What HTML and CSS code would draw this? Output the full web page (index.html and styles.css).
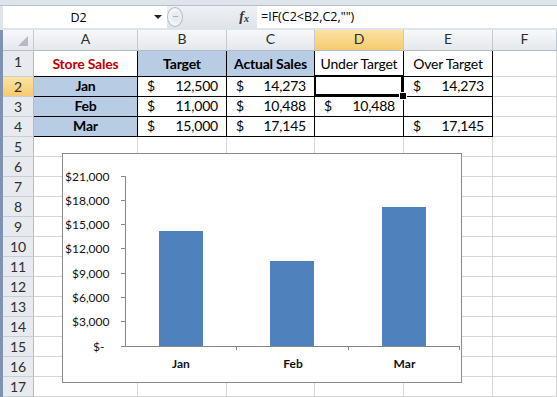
FILE: index.html
```html
<!DOCTYPE html>
<html lang="en">
<head>
    <meta charset="UTF-8">
    <title>Store Sales - Excel</title>
    <link rel="stylesheet" href="styles.css">
</head>
<body>
    <div class="app">
        <div class="ribbon-edge"></div>

        <div class="formula-bar">
            <div class="name-box">
                <span class="name">D2</span>
                <span class="caret"></span>
            </div>
            <div class="splitter">
                <span class="knob"></span>
                <span class="fx">f<sub>x</sub></span>
            </div>
            <div class="formula">=IF(C2&lt;B2,C2,"")</div>
        </div>

        <div class="sheet">
            <div class="grid">
                <!-- column headers -->
                <div class="c ch corner"></div>
                <div class="c ch">A</div>
                <div class="c ch">B</div>
                <div class="c ch">C</div>
                <div class="c ch on">D</div>
                <div class="c ch">E</div>
                <div class="c ch">F</div>

                <!-- row 1 -->
                <div class="c rh">1</div>
                <div class="c t b red ctr">Store Sales</div>
                <div class="c t b fill ctr">Target</div>
                <div class="c t b fill ctr">Actual Sales</div>
                <div class="c t ctr">Under Target</div>
                <div class="c t ctr">Over Target</div>
                <div class="c"></div>

                <!-- row 2 -->
                <div class="c rh on">2</div>
                <div class="c t b fill ctr">Jan</div>
                <div class="c t money"><span>$</span><span>12,500</span></div>
                <div class="c t money"><span>$</span><span>14,273</span></div>
                <div class="c t sel"></div>
                <div class="c t money"><span>$</span><span>14,273</span></div>
                <div class="c"></div>

                <!-- row 3 -->
                <div class="c rh">3</div>
                <div class="c t b fill ctr">Feb</div>
                <div class="c t money"><span>$</span><span>11,000</span></div>
                <div class="c t money"><span>$</span><span>10,488</span></div>
                <div class="c t money"><span>$</span><span>10,488</span></div>
                <div class="c t"></div>
                <div class="c"></div>

                <!-- row 4 -->
                <div class="c rh">4</div>
                <div class="c t b fill ctr">Mar</div>
                <div class="c t money"><span>$</span><span>15,000</span></div>
                <div class="c t money"><span>$</span><span>17,145</span></div>
                <div class="c t"></div>
                <div class="c t money"><span>$</span><span>17,145</span></div>
                <div class="c"></div>

                <!-- empty rows -->
                <div class="c rh">5</div><div class="c"></div><div class="c"></div><div class="c"></div><div class="c"></div><div class="c"></div><div class="c"></div>
                <div class="c rh">6</div><div class="c"></div><div class="c"></div><div class="c"></div><div class="c"></div><div class="c"></div><div class="c"></div>
                <div class="c rh">7</div><div class="c"></div><div class="c"></div><div class="c"></div><div class="c"></div><div class="c"></div><div class="c"></div>
                <div class="c rh">8</div><div class="c"></div><div class="c"></div><div class="c"></div><div class="c"></div><div class="c"></div><div class="c"></div>
                <div class="c rh">9</div><div class="c"></div><div class="c"></div><div class="c"></div><div class="c"></div><div class="c"></div><div class="c"></div>
                <div class="c rh">10</div><div class="c"></div><div class="c"></div><div class="c"></div><div class="c"></div><div class="c"></div><div class="c"></div>
                <div class="c rh">11</div><div class="c"></div><div class="c"></div><div class="c"></div><div class="c"></div><div class="c"></div><div class="c"></div>
                <div class="c rh">12</div><div class="c"></div><div class="c"></div><div class="c"></div><div class="c"></div><div class="c"></div><div class="c"></div>
                <div class="c rh">13</div><div class="c"></div><div class="c"></div><div class="c"></div><div class="c"></div><div class="c"></div><div class="c"></div>
                <div class="c rh">14</div><div class="c"></div><div class="c"></div><div class="c"></div><div class="c"></div><div class="c"></div><div class="c"></div>
                <div class="c rh">15</div><div class="c"></div><div class="c"></div><div class="c"></div><div class="c"></div><div class="c"></div><div class="c"></div>
                <div class="c rh">16</div><div class="c"></div><div class="c"></div><div class="c"></div><div class="c"></div><div class="c"></div><div class="c"></div>
                <div class="c rh">17</div><div class="c"></div><div class="c"></div><div class="c"></div><div class="c"></div><div class="c"></div><div class="c"></div>
            </div>

            <!-- embedded chart floats over the cells -->
            <div class="chart">
                <svg width="398" height="228" viewBox="0 0 398 228">
                    <g class="bars">
                        <rect x="96" y="77" width="44" height="115.5"/>
                        <rect x="207" y="107" width="44" height="85.5"/>
                        <rect x="319" y="53" width="44" height="139.5"/>
                    </g>
                    <g class="axis">
                        <line x1="62.5" y1="22" x2="62.5" y2="193"/>
                        <line x1="62" y1="192.5" x2="397" y2="192.5"/>
                        <line x1="58" y1="22.5" x2="62" y2="22.5"/>
                        <line x1="58" y1="46.5" x2="62" y2="46.5"/>
                        <line x1="58" y1="70.5" x2="62" y2="70.5"/>
                        <line x1="58" y1="94.5" x2="62" y2="94.5"/>
                        <line x1="58" y1="119.5" x2="62" y2="119.5"/>
                        <line x1="58" y1="143.5" x2="62" y2="143.5"/>
                        <line x1="58" y1="167.5" x2="62" y2="167.5"/>
                        <line x1="58" y1="192.5" x2="62" y2="192.5"/>
                        <line x1="173.5" y1="192" x2="173.5" y2="196"/>
                        <line x1="285.5" y1="192" x2="285.5" y2="196"/>
                        <line x1="396.5" y1="192" x2="396.5" y2="196"/>
                    </g>
                    <g class="ylabels">
                        <text x="46.5" y="26.5">$21,000</text>
                        <text x="46.5" y="50.5">$18,000</text>
                        <text x="46.5" y="74.5">$15,000</text>
                        <text x="46.5" y="98.5">$12,000</text>
                        <text x="46.5" y="123.5">$9,000</text>
                        <text x="46.5" y="147.5">$6,000</text>
                        <text x="46.5" y="171.5">$3,000</text>
                        <text x="41.5" y="196.5">$-</text>
                    </g>
                    <g class="xlabels">
                        <text x="118" y="214">Jan</text>
                        <text x="230" y="214">Feb</text>
                        <text x="341.5" y="214">Mar</text>
                    </g>
                </svg>
            </div>
        </div>
    </div>
</body>
</html>
```

FILE: styles.css
```css
:root {
    --grid-line: #d6d6d6;
    --header-line: #b4bcc7;
    --accent-fill: #b8cce4;
    --bar-color: #4f81bd;
    --axis-color: #868686;
    --red-text: #c00000;
}

* {
    box-sizing: border-box;
}

body {
    margin: 0;
    font-family: Lato, "Liberation Sans", sans-serif;
    color: #000;
    background-color: #fff;
}

.app {
    width: 557px;
    height: 397px;
    overflow: hidden;
    background-color: #dfe4eb;
}

/* formula bar */

.ribbon-edge {
    height: 6px;
    border-bottom: 1px solid #b7c0cc;
}

.formula-bar {
    display: flex;
    height: 22px;
    margin-left: 3px;
    margin-bottom: 2px;
    font-family: "Open Sans", "Liberation Sans", sans-serif;
    font-size: 12.5px;
}

.name-box {
    display: flex;
    align-items: center;
    width: 164px;
    background-color: #fff;
}

.name {
    flex: 1;
    text-align: center;
}

.caret {
    width: 0;
    height: 0;
    margin-right: 5px;
    border-left: 4px solid transparent;
    border-right: 4px solid transparent;
    border-top: 4px solid #222;
}

.splitter {
    display: flex;
    align-items: center;
    width: 90px;
    background: linear-gradient(#eef1f5, #dfe4ea);
}

.knob {
    width: 16px;
    height: 20px;
    border: 1px solid #b3bcc8;
    border-radius: 50%;
    background: radial-gradient(circle at 60% 50%, #e7ebf0 30%, #f6f8fa 70%);
    position: relative;
}

.knob::after {
    content: "";
    position: absolute;
    left: 5px;
    top: 8px;
    width: 5px;
    height: 1px;
    background-color: #a9b1bc;
}

.fx {
    margin-left: auto;
    margin-right: 8px;
    font-family: "Liberation Serif", serif;
    font-style: italic;
    font-weight: 700;
    font-size: 14px;
    color: #333;
}

.fx sub {
    font-size: 10px;
    vertical-align: -1px;
}

.formula {
    flex: 1;
    padding-left: 4px;
    line-height: 22px;
    background-color: #fff;
}

/* worksheet */

.sheet {
    position: relative;
    height: 367px;
    border-left: 3px solid #7d93b1;
    background-color: #fff;
}

.grid {
    display: grid;
    grid-template-columns: 31px 104px 89px 88px 89px 89px 1fr;
    grid-template-rows: 21px 26px repeat(16, 20px);
    font-size: 14px;
    letter-spacing: -0.2px;
}

.c {
    display: flex;
    align-items: flex-end;
    padding-bottom: 1px;
    line-height: 18px;
    border-right: 1px solid var(--grid-line);
    border-bottom: 1px solid var(--grid-line);
    white-space: nowrap;
}

.ch {
    align-items: center;
    justify-content: center;
    padding-bottom: 0;
    font-size: 14px;
    letter-spacing: 0;
    color: #2e2e2e;
    background: linear-gradient(#f7f8fa, #e4e8ed);
    border-right-color: #c3c9d1;
    border-bottom-color: var(--header-line);
}

.rh {
    align-items: center;
    justify-content: center;
    padding-bottom: 0;
    font-size: 14px;
    letter-spacing: 0;
    color: #2e2e2e;
    background-color: #e7eaef;
    border-right-color: var(--header-line);
    border-bottom-color: #c9ced5;
}

.ch.on,
.rh.on {
    background: linear-gradient(#fbe3a3, #f5cb6e);
}

.corner {
    position: relative;
}

.corner::after {
    content: "";
    position: absolute;
    right: 5px;
    bottom: 4px;
    width: 0;
    height: 0;
    border-left: 10px solid transparent;
    border-bottom: 10px solid #b5bbc4;
}

.grid > .c:nth-child(-n+14) {
    padding-bottom: 3px;
}

.t {
    border-right-color: #000;
    border-bottom-color: #000;
}

.b {
    font-weight: 700;
}

.red {
    color: var(--red-text);
}

.fill {
    background-color: var(--accent-fill);
}

.ctr {
    justify-content: center;
}

.money {
    justify-content: space-between;
    padding-left: 9px;
    padding-right: 8px;
}

.sel {
    position: relative;
}

.sel::after {
    content: "";
    position: absolute;
    left: -1px;
    top: -2px;
    right: 0;
    bottom: 0;
    border: 2px solid #000;
}

.sel::before {
    content: "";
    position: absolute;
    right: -3px;
    bottom: -3px;
    width: 6px;
    height: 6px;
    background-color: #000;
    box-shadow: 0 0 0 1px #fff;
    z-index: 1;
}

/* chart */

.chart {
    position: absolute;
    left: 59px;
    top: 123px;
    width: 400px;
    height: 230px;
    background-color: #fff;
    border: 1px solid #8a8a8a;
}

.chart svg {
    display: block;
}

.bars rect {
    fill: var(--bar-color);
}

.axis line {
    stroke: var(--axis-color);
    stroke-width: 1;
}

.ylabels text {
    font-family: Lato, "Liberation Sans", sans-serif;
    font-size: 12px;
    text-anchor: end;
    fill: #111;
}

.xlabels text {
    font-family: Lato, "Liberation Sans", sans-serif;
    font-size: 12px;
    font-weight: 700;
    text-anchor: middle;
    fill: #111;
}
```
